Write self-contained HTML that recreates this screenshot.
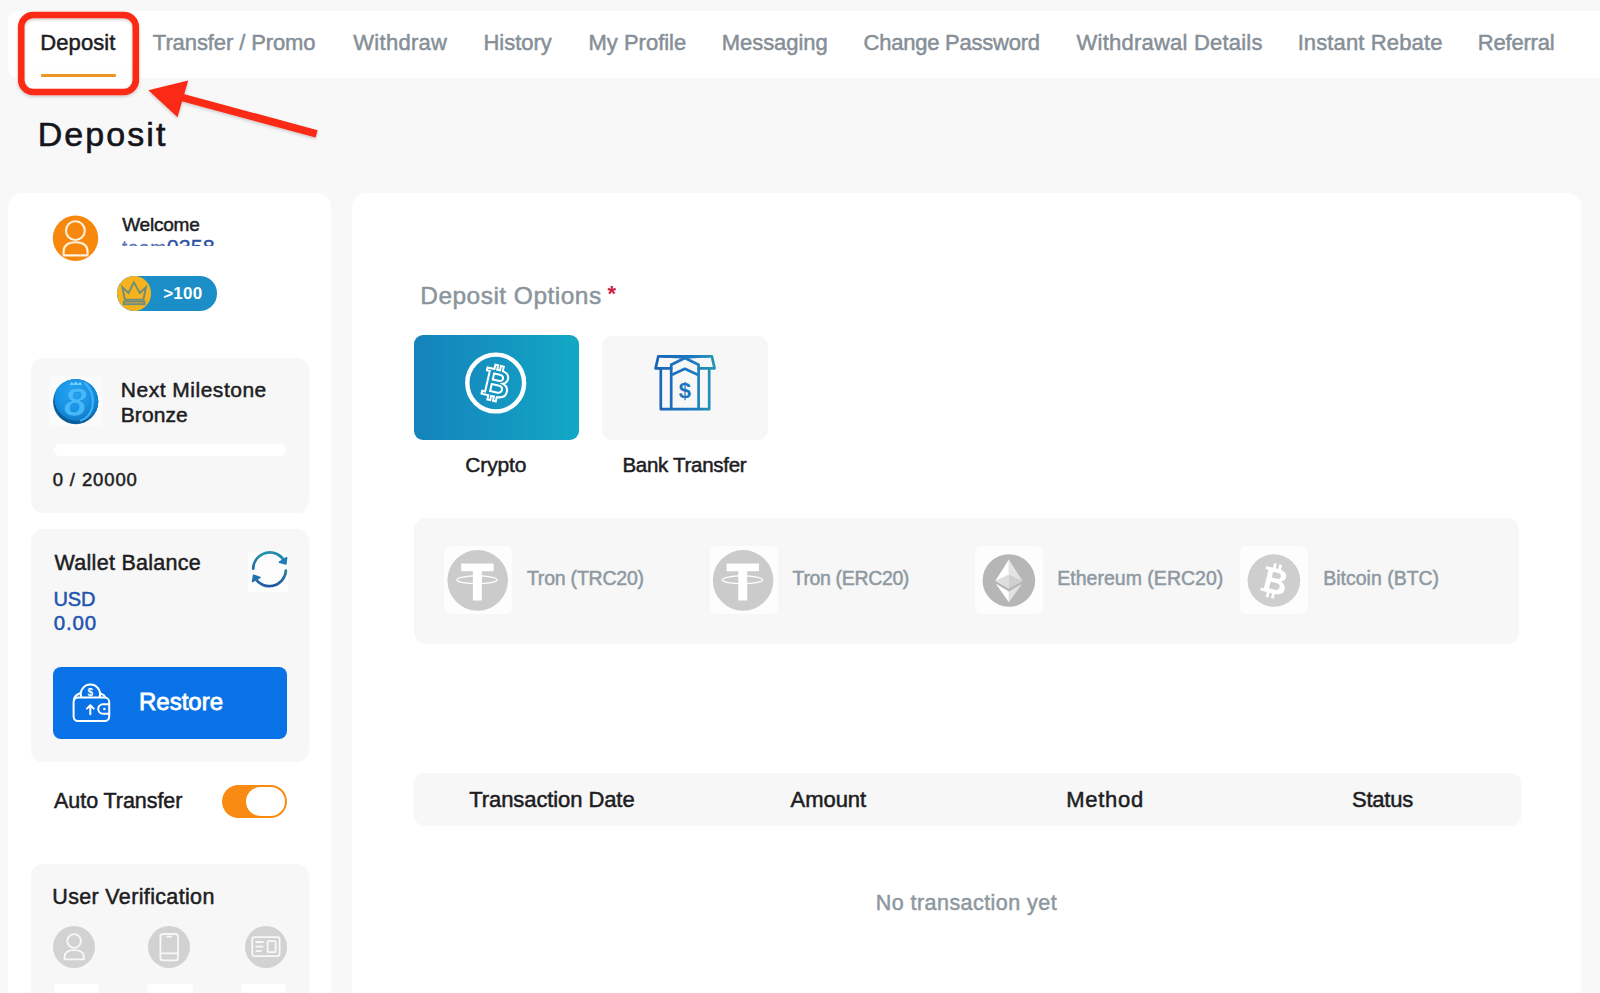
<!DOCTYPE html>
<html><head><meta charset="utf-8"><title>Deposit</title>
<style>
*{box-sizing:border-box;margin:0;padding:0}
html,body{width:1600px;height:993px;overflow:hidden;background:#f8f8f8;font-family:"Liberation Sans",sans-serif}
body{position:relative}
.a{position:absolute}
.t{position:absolute;white-space:pre;line-height:1;font-family:"Liberation Sans",sans-serif}
.nav{left:8px;top:10.5px;width:1600px;height:67px;background:#fff;border-radius:10px 0 0 10px}
.uline{left:41px;top:73.7px;width:74.8px;height:3.5px;background:#ee9526;border-radius:1px}
.side{left:8px;top:193px;width:323px;height:820px;background:#fff;border-radius:14px}
.main{left:352.4px;top:193px;width:1228.6px;height:820px;background:#fff;border-radius:14px}
.inner{background:#f7f7f7;border-radius:12px}
.mile{left:31px;top:358px;width:278px;height:155px}
.wallet{left:31px;top:529px;width:278px;height:233px}
.verif{left:31px;top:864px;width:278px;height:150px}
.pbar{left:54px;top:444.3px;width:231.6px;height:11.4px;background:#fff;border-radius:6px}
.restore{left:53.2px;top:666.8px;width:233.7px;height:72.2px;background:#0a72e7;border-radius:8px}
.toggle{left:222.2px;top:784.6px;width:64.8px;height:33.6px;background:#f98a12;border-radius:17px}
.knob{left:245.5px;top:786.6px;width:39.5px;height:29.6px;background:#fff;border-radius:15px}
.vc{width:42.2px;height:42.2px;border-radius:50%;background:#d2d2d2;top:925.6px}
.vb{top:984px;height:12px;background:#fff;border-radius:4px}
.crypto{left:413.5px;top:334.7px;width:165.7px;height:105.8px;border-radius:9px;background:linear-gradient(90deg,#1483bb 0%,#1492c0 45%,#12a8c5 100%)}
.bank{left:601.7px;top:335.5px;width:166.3px;height:104px;border-radius:10px;background:#f7f7f7}
.net{left:414px;top:517.5px;width:1105px;height:126.7px;background:#f7f7f7;border-radius:12px}
.sq{top:546px;width:68px;height:68px;background:#fdfdfd;border-radius:7px}
.thead{left:414px;top:773.2px;width:1106.5px;height:52px;background:#f7f7f7;border-radius:10px;box-shadow:0 1px 2px rgba(0,0,0,.03)}
.pill{left:116.6px;top:276.2px;width:100.5px;height:34.4px;border-radius:17.2px;background:#1b8ec7;overflow:hidden}
.pillc{left:0;top:0;width:34.4px;height:34.4px;border-radius:50%;background:#f5b31e}
.uname{left:121.9px;top:239.3px;width:100px;height:6.4px;overflow:hidden}
.uname span{position:absolute;left:0;top:-1.2px;font-size:21.5px;line-height:1;color:#2c4fa6;white-space:pre;-webkit-text-stroke:.3px #2c4fa6}
.uname i{font-style:normal;font-size:19.5px;letter-spacing:.4px;opacity:.8}
.star{left:607.6px;top:283.4px;font-size:22px;line-height:1;color:#cf2140;font-weight:700}
svg{position:absolute;overflow:visible}

</style></head>
<body>
<div class="a nav"></div>
<div class="a" style="left:23px;top:70px;width:111px;height:20.5px;background:#fefefe;border-radius:0 0 10px 10px"></div>
<div class="a uline"></div>
<div class="a side"></div>
<div class="a main"></div>

<!-- sidebar blocks -->
<div class="a uname"><span><i>team</i>0358</span></div>
<div class="a pill"><div class="a pillc"></div></div>
<div class="a inner mile"></div>
<div class="a pbar"></div>
<div class="a inner wallet"></div>
<div class="a restore"></div>
<div class="a toggle"></div><div class="a knob"></div>
<div class="a inner verif"></div>
<div class="a vc" style="left:53px"></div>
<div class="a vc" style="left:148.1px"></div>
<div class="a vc" style="left:244.8px"></div>
<div class="a vb" style="left:53.8px;width:45.5px"></div>
<div class="a vb" style="left:147.2px;width:45.5px"></div>
<div class="a vb" style="left:240.7px;width:45.5px"></div>

<!-- main blocks -->
<div class="a star">*</div>
<div class="a crypto"></div>
<div class="a bank"></div>
<div class="a net"></div>
<div class="a sq" style="left:443.5px"></div>
<div class="a sq" style="left:709.5px"></div>
<div class="a sq" style="left:975px"></div>
<div class="a sq" style="left:1240px"></div>
<div class="a thead"></div>

<!--ICONS-->
<svg class="a" style="left:0;top:0" width="1600" height="993" viewBox="0 0 1600 993">
<defs>
  <radialGradient id="coin" cx="0.42" cy="0.38" r="0.62">
    <stop offset="0" stop-color="#27a6f2"/><stop offset="0.6" stop-color="#1993e6"/><stop offset="0.9" stop-color="#1282d2"/><stop offset="1" stop-color="#0f76c2"/>
  </radialGradient>
  <linearGradient id="rf1" x1="252" y1="578" x2="288" y2="556" gradientUnits="userSpaceOnUse">
    <stop offset="0" stop-color="#1f5aa6"/><stop offset="0.5" stop-color="#2a97a9"/><stop offset="1" stop-color="#1f7fb8"/>
  </linearGradient>
  <linearGradient id="rf2" x1="252" y1="585" x2="288" y2="565" gradientUnits="userSpaceOnUse">
    <stop offset="0" stop-color="#1f6fb0"/><stop offset="0.45" stop-color="#1f4f9f"/><stop offset="1" stop-color="#2a9099"/>
  </linearGradient>
  <linearGradient id="bk" x1="655" y1="380" x2="715" y2="380" gradientUnits="userSpaceOnUse">
    <stop offset="0" stop-color="#1a63b5"/><stop offset="0.6" stop-color="#1e78c2"/><stop offset="1" stop-color="#2597b5"/>
  </linearGradient>
</defs>

<!-- avatar -->
<circle cx="75.5" cy="238.3" r="22.7" fill="#f8870d"/>
<circle cx="75.4" cy="230.6" r="9.4" fill="none" stroke="#fff1da" stroke-width="2.1"/>
<path d="M63.6 254.4 V251.8 Q63.6 242.2 75.6 242.2 Q87.6 242.2 87.6 251.8 V254.4 Q87.6 255.4 86.6 255.4 H64.6 Q63.6 255.4 63.6 254.4 Z" fill="none" stroke="#fff1da" stroke-width="2.1" stroke-linejoin="round"/>

<!-- crown on pill -->
<g fill="none" stroke="#6f8d7d" stroke-width="1.9" stroke-linejoin="miter">
  <path d="M122.3 287.2 L128.6 293 L133.8 282.4 L139.8 293 L146 287.2 L143.3 299.8 H125 Z"/>
  <rect x="123.9" y="301.6" width="20.6" height="2.6"/>
</g>

<!-- milestone coin -->
<rect x="49" y="376.5" width="53.5" height="50.5" fill="#fbfbfb"/>
<clipPath id="cc"><circle cx="75.7" cy="401.6" r="22.6"/></clipPath>
<circle cx="75.7" cy="401.6" r="22.6" fill="#0a5d9b"/>
<g clip-path="url(#cc)">
  <circle cx="77.2" cy="398.2" r="22.8" fill="url(#coin)"/>
  <path d="M85.5 383.5 Q95 393 92.4 407 Q90 417 81 420.6" fill="none" stroke="#49bdfa" stroke-width="2.2" opacity=".8" stroke-linecap="round"/>
  <text x="75.2" y="416" text-anchor="middle" style="font-family:'Liberation Sans',sans-serif;font-size:41px;font-weight:700;font-style:italic" fill="#45b9f9" stroke="#1a86d4" stroke-width=".5">8</text>
  <path d="M69.6 385 l1.6-3 2.4 1.8 2.2-2.4 2.2 2.4 2.6-1.8 1.4 3z" fill="#74cffc"/>
</g>

<!-- refresh -->
<rect x="248" y="551.5" width="40" height="40.5" fill="#fcfcfc"/>
<g fill="none" stroke-width="2.7" stroke-linecap="round">
  <path d="M253.2 568.6 A16.6 16.6 0 0 1 284.6 561.5" stroke="url(#rf1)"/>
  <path d="M285.9 570.6 A16.6 16.6 0 0 1 254.8 577.6" stroke="url(#rf2)"/>
</g>
<path d="M286.6 557.6 L285.9 563.9 L279.4 562.2 Z" fill="#1f7db6" stroke="#1f7db6" stroke-width="1.6" stroke-linejoin="round"/>
<path d="M252.6 581.6 L253.6 575.2 L260 577.4 Z" fill="#1f74ae" stroke="#1f74ae" stroke-width="1.6" stroke-linejoin="round"/>

<!-- wallet in restore -->
<g fill="none" stroke="#fff" stroke-width="2" stroke-linecap="round" stroke-linejoin="round">
  <rect x="73.6" y="697.6" width="35.6" height="23.4" rx="4.5"/>
  <path d="M73.8 700.5 Q74 695.6 80 693.2"/>
  <path d="M101 693.6 Q104.4 695 105.4 697.4"/>
  <path d="M81.2 696.9 A9.6 9.6 0 1 1 99.6 696.9"/>
  <path d="M109.2 704.2 H103 A4.8 4.8 0 0 0 103 713.8 H109.2"/>
  <path d="M90.3 714.2 V705.6 M86.9 708.6 L90.3 705.2 L93.7 708.6"/>
</g>
<circle cx="104.4" cy="709" r="1.3" fill="#fff"/>
<text x="90.3" y="696" text-anchor="middle" style="font-family:'Liberation Sans',sans-serif;font-size:10px;font-weight:700" fill="#fff">$</text>

<!-- verification icons -->
<g fill="none" stroke="#f8f8f8" stroke-width="1.8" stroke-linejoin="round">
  <circle cx="74.1" cy="941" r="6.8"/>
  <path d="M64.6 959.4 V957 Q64.6 950.2 74.2 950.2 Q83.8 950.2 83.8 957 V959.4 Z"/>
  <rect x="160.4" y="934" width="17.6" height="26.4" rx="2.6"/>
  <path d="M160.4 953.4 H178 M166.6 936.6 H171.8"/>
  <rect x="252.2" y="937.2" width="27.4" height="19" rx="2.4"/>
  <rect x="267.6" y="941.2" width="8" height="11" rx="1"/>
  <path d="M255.6 942 H263.6 M255.6 946.6 H263.6 M255.6 951.2 H261.6"/>
</g>
<!-- crypto tile: bitcoin in ring -->
<circle cx="495.7" cy="383" r="28.4" fill="none" stroke="#fff" stroke-width="4.4"/>
<g transform="translate(495.3 383) rotate(13) scale(.96)" fill="none" stroke="#fff" stroke-width="2.1" stroke-linejoin="miter">
  <path d="M-11.5 -14 H-4.2 V-18.6 H-1.2 V-14 H1.8 V-18.6 H4.8 V-13.8 C9.6 -13 12 -10.6 12 -7.2 C12 -4.2 10.4 -2 7.8 -1 C11.6 0 13.8 2.6 13.8 6.4 C13.8 11.2 10.4 13.6 4.8 14 V18.6 H1.8 V14 H-1.2 V18.6 H-4.2 V14 H-11.5 V11 H-8.4 V-11 H-11.5 Z"/>
  <path d="M-3.4 -9.4 H2.6 C5.4 -9.4 6.8 -8.2 6.8 -6.2 C6.8 -4.2 5.4 -3 2.6 -3 H-3.4 Z"/>
  <path d="M-3.4 1.8 H3.6 C6.8 1.8 8.4 3.2 8.4 5.6 C8.4 8 6.8 9.4 3.6 9.4 H-3.4 Z"/>
</g>

<!-- bank icon -->
<g fill="none" stroke="url(#bk)" stroke-width="2.7" stroke-linejoin="round" stroke-linecap="round">
  <path d="M658.3 356.4 H711.9 L714.6 368.4 H698.6 M671.2 368.4 H655.6 L658.3 356.4"/>
  <path d="M671.2 409 V364.8 L684.9 358 L698.6 364.8 V409"/>
  <path d="M672.6 374.4 L684.9 368.8 L697.2 374.4"/>
  <path d="M660.8 368.4 V409.2 H709.2 V368.4"/>
  <path d="M662 356.6 L684.9 358 L708 356.6" stroke-width="1.6"/>
</g>
<text x="684.9" y="398" text-anchor="middle" style="font-family:'Liberation Sans',sans-serif;font-size:22px;font-weight:700" fill="#1c73c0">$</text>

<!-- USDT x2 -->
<g>
  <circle cx="477.7" cy="580.4" r="30.3" fill="#cbcbcb"/>
  <path d="M461.2 563.4 H493.6 V571.2 H481.8 V600.4 H472.9 V571.2 H461.2 Z" fill="#fff"/>
  <ellipse cx="477" cy="579.8" rx="20.2" ry="3.9" fill="none" stroke="#fff" stroke-width="1.3"/>
  <rect x="473.4" y="574" width="8" height="4.8" fill="#fff"/>
</g>
<g transform="translate(265.4 0)">
  <circle cx="477.7" cy="580.4" r="30.3" fill="#cbcbcb"/>
  <path d="M461.2 563.4 H493.6 V571.2 H481.8 V600.4 H472.9 V571.2 H461.2 Z" fill="#fff"/>
  <ellipse cx="477" cy="579.8" rx="20.2" ry="3.9" fill="none" stroke="#fff" stroke-width="1.3"/>
  <rect x="473.4" y="574" width="8" height="4.8" fill="#fff"/>
</g>

<!-- ETH -->
<circle cx="1008.9" cy="580.5" r="26.3" fill="#b6b6b6"/>
<path d="M1008.9 559.6 L995.4 580.8 L1008.9 588.6 Z" fill="#ffffff"/>
<path d="M1008.9 559.6 L1022.4 580.8 L1008.9 588.6 Z" fill="#e4e4e4"/>
<path d="M1008.9 574.6 L995.4 580.8 L1008.9 588.6 Z" fill="#dedede"/>
<path d="M1008.9 574.6 L1022.4 580.8 L1008.9 588.6 Z" fill="#cfcfcf"/>
<path d="M995.8 583.8 L1008.9 591.4 V602.2 Z" fill="#ffffff"/>
<path d="M1022 583.8 L1008.9 591.4 V602.2 Z" fill="#e2e2e2"/>

<!-- BTC -->
<circle cx="1273.9" cy="580.5" r="26.3" fill="#cecece"/>
<g transform="translate(1273.6 580.8) rotate(14)" fill="#fff" fill-rule="evenodd">
  <path d="M-10.6 -12.6 H-3.8 V-17.4 H-1 V-12.6 H1.6 V-17.4 H4.4 V-12.4 C9 -11.8 11.2 -9.6 11.2 -6.4 C11.2 -3.8 9.8 -1.8 7.4 -0.9 C10.8 0 12.8 2.4 12.8 5.8 C12.8 10.2 9.6 12.3 4.4 12.6 V17.4 H1.6 V12.6 H-1 V17.4 H-3.8 V12.6 H-10.6 V9.6 H-7.6 V-9.6 H-10.6 Z
           M-2.6 -8.6 V-2.8 H2.2 C4.8 -2.8 6 -3.8 6 -5.7 C6 -7.6 4.8 -8.6 2.2 -8.6 Z
           M-2.6 1.4 V8.4 H3.2 C6 8.4 7.4 7.2 7.4 4.9 C7.4 2.6 6 1.4 3.2 1.4 Z"/>
</g>

<!-- red annotation -->
<g filter="url(#sh)">
  <rect x="21.2" y="15" width="114.6" height="77" rx="12" fill="none" stroke="#fa2a12" stroke-width="6.6"/>
  <path d="M316.6 133.9 L178 96.3" stroke="#fa2a12" stroke-width="7.6" fill="none"/>
  <path d="M148.4 90.2 L188.2 80.5 L177.5 117.3 Z" fill="#fa2a12"/>
</g>
<defs>
  <filter id="sh" x="-10%" y="-20%" width="120%" height="150%">
    <feDropShadow dx="0" dy="1.5" stdDeviation="1.6" flood-color="#000" flood-opacity=".2"/>
  </filter>
</defs>
</svg>

<!-- text layer -->
<span class="t" style="left:40.33px;top:32px;font-size:22px;letter-spacing:0.07px;color:#1d1d1f;font-weight:400;-webkit-text-stroke:0.5px #1d1d1f">Deposit</span>
<span class="t" style="left:152.87px;top:32px;font-size:22px;letter-spacing:-0.10px;color:#868f97;font-weight:400;-webkit-text-stroke:0.5px #868f97">Transfer / Promo</span>
<span class="t" style="left:353.25px;top:32px;font-size:22px;letter-spacing:0.29px;color:#868f97;font-weight:400;-webkit-text-stroke:0.5px #868f97">Withdraw</span>
<span class="t" style="left:483.53px;top:32px;font-size:22px;letter-spacing:-0.03px;color:#868f97;font-weight:400;-webkit-text-stroke:0.5px #868f97">History</span>
<span class="t" style="left:588.53px;top:32px;font-size:22px;letter-spacing:-0.01px;color:#868f97;font-weight:400;-webkit-text-stroke:0.5px #868f97">My Profile</span>
<span class="t" style="left:721.73px;top:32px;font-size:22px;letter-spacing:-0.05px;color:#868f97;font-weight:400;-webkit-text-stroke:0.5px #868f97">Messaging</span>
<span class="t" style="left:863.56px;top:32px;font-size:22px;letter-spacing:-0.24px;color:#868f97;font-weight:400;-webkit-text-stroke:0.5px #868f97">Change Password</span>
<span class="t" style="left:1076.55px;top:32px;font-size:22px;letter-spacing:0.22px;color:#868f97;font-weight:400;-webkit-text-stroke:0.5px #868f97">Withdrawal Details</span>
<span class="t" style="left:1297.64px;top:32px;font-size:22px;letter-spacing:0.13px;color:#868f97;font-weight:400;-webkit-text-stroke:0.5px #868f97">Instant Rebate</span>
<span class="t" style="left:1477.73px;top:32px;font-size:22px;letter-spacing:-0.19px;color:#868f97;font-weight:400;-webkit-text-stroke:0.5px #868f97">Referral</span>
<span class="t" style="left:37.75px;top:117px;font-size:34px;letter-spacing:2.05px;color:#14141a;font-weight:400;-webkit-text-stroke:0.6px #14141a">Deposit</span>
<span class="t" style="left:122.15px;top:215px;font-size:19px;letter-spacing:-0.21px;color:#1d1d1f;font-weight:400;-webkit-text-stroke:0.5px #1d1d1f">Welcome</span>
<span class="t" style="left:163.14px;top:285px;font-size:17px;letter-spacing:0.23px;color:#ffffff;font-weight:700;">&gt;100</span>
<span class="t" style="left:120.77px;top:379px;font-size:21px;letter-spacing:0.51px;color:#1d1d1f;font-weight:400;-webkit-text-stroke:0.5px #1d1d1f">Next Milestone</span>
<span class="t" style="left:120.77px;top:404px;font-size:21px;letter-spacing:0.10px;color:#1d1d1f;font-weight:400;-webkit-text-stroke:0.5px #1d1d1f">Bronze</span>
<span class="t" style="left:52.66px;top:471px;font-size:18.5px;letter-spacing:0.88px;color:#1d1d1f;font-weight:400;-webkit-text-stroke:0.5px #1d1d1f">0 / 20000</span>
<span class="t" style="left:54.55px;top:553px;font-size:21.5px;letter-spacing:0.28px;color:#1d1d1f;font-weight:400;-webkit-text-stroke:0.5px #1d1d1f">Wallet Balance</span>
<span class="t" style="left:53.52px;top:589px;font-size:20px;letter-spacing:-0.10px;color:#1f55b0;font-weight:400;-webkit-text-stroke:0.5px #1f55b0">USD</span>
<span class="t" style="left:53.64px;top:613px;font-size:20.5px;letter-spacing:0.91px;color:#1f55b0;font-weight:400;-webkit-text-stroke:0.5px #1f55b0">0.00</span>
<span class="t" style="left:139.02px;top:690px;font-size:24px;letter-spacing:0.00px;color:#ffffff;font-weight:400;-webkit-text-stroke:0.8px #ffffff">Restore</span>
<span class="t" style="left:54.05px;top:791px;font-size:21.5px;letter-spacing:-0.06px;color:#1d1d1f;font-weight:400;-webkit-text-stroke:0.5px #1d1d1f">Auto Transfer</span>
<span class="t" style="left:52.26px;top:887px;font-size:21.5px;letter-spacing:0.35px;color:#1d1d1f;font-weight:400;-webkit-text-stroke:0.5px #1d1d1f">User Verification</span>
<span class="t" style="left:420.24px;top:284px;font-size:24.5px;letter-spacing:0.47px;color:#8b959d;font-weight:400;-webkit-text-stroke:0.5px #8b959d">Deposit Options</span>
<span class="t" style="left:465.27px;top:454px;font-size:21px;letter-spacing:-0.12px;color:#1d1d1f;font-weight:400;-webkit-text-stroke:0.5px #1d1d1f">Crypto</span>
<span class="t" style="left:622.47px;top:455px;font-size:20.5px;letter-spacing:-0.29px;color:#1d1d1f;font-weight:400;-webkit-text-stroke:0.5px #1d1d1f">Bank Transfer</span>
<span class="t" style="left:526.88px;top:569px;font-size:19.5px;letter-spacing:-0.21px;color:#8e99a2;font-weight:400;-webkit-text-stroke:0.5px #8e99a2">Tron (TRC20)</span>
<span class="t" style="left:792.58px;top:569px;font-size:19.5px;letter-spacing:-0.35px;color:#8e99a2;font-weight:400;-webkit-text-stroke:0.5px #8e99a2">Tron (ERC20)</span>
<span class="t" style="left:1057.21px;top:569px;font-size:19.5px;letter-spacing:0.02px;color:#8e99a2;font-weight:400;-webkit-text-stroke:0.5px #8e99a2">Ethereum (ERC20)</span>
<span class="t" style="left:1323.31px;top:569px;font-size:19.5px;letter-spacing:-0.01px;color:#8e99a2;font-weight:400;-webkit-text-stroke:0.5px #8e99a2">Bitcoin (BTC)</span>
<span class="t" style="left:469.27px;top:789px;font-size:22px;letter-spacing:-0.09px;color:#1d1d1f;font-weight:400;-webkit-text-stroke:0.5px #1d1d1f">Transaction Date</span>
<span class="t" style="left:790.55px;top:789px;font-size:22px;letter-spacing:-0.04px;color:#1d1d1f;font-weight:400;-webkit-text-stroke:0.5px #1d1d1f">Amount</span>
<span class="t" style="left:1066.23px;top:789px;font-size:22px;letter-spacing:0.71px;color:#1d1d1f;font-weight:400;-webkit-text-stroke:0.5px #1d1d1f">Method</span>
<span class="t" style="left:1352.04px;top:789px;font-size:22px;letter-spacing:-0.25px;color:#1d1d1f;font-weight:400;-webkit-text-stroke:0.5px #1d1d1f">Status</span>
<span class="t" style="left:875.74px;top:893px;font-size:21.5px;letter-spacing:0.45px;color:#8e989f;font-weight:400;-webkit-text-stroke:0.5px #8e989f">No transaction yet</span>
</body></html>
